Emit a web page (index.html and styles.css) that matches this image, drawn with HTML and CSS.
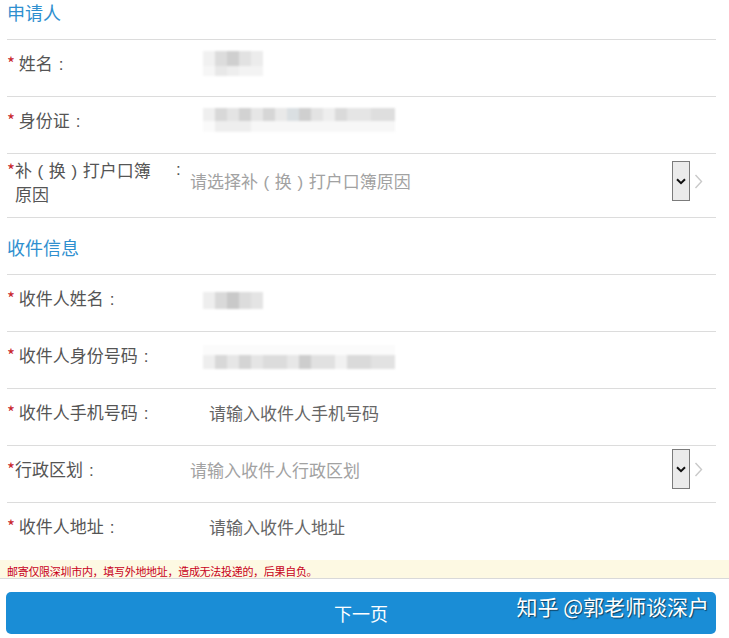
FILE: index.html
```html
<!DOCTYPE html>
<html lang="zh-CN">
<head>
<meta charset="utf-8">
<title>申请人</title>
<link rel="stylesheet" href="styles.css">
</head>
<body>
<div class="form">
  <div class="section-head first">申请人</div>
  <div class="row">
    <div class="label"><span class="req">*</span> 姓名<span class="colon">:</span></div>
    <div class="value"><div class="mosaic mosaic-short"></div></div>
  </div>
  <div class="row">
    <div class="label"><span class="req">*</span> 身份证<span class="colon">:</span></div>
    <div class="value"><div class="mosaic mosaic-long"></div></div>
  </div>
  <div class="row row-tall">
    <div class="label label-wrap"><span class="req">*</span><span class="wrap-text"><span class="line">补<span class="paren">(</span>换<span class="paren">)</span>打户口簿</span><span class="line">原因</span></span><span class="colon">:</span></div>
    <div class="value select">
      <span class="select-text">请选择补<span class="paren">(</span>换<span class="paren">)</span>打户口簿原因</span>
      <span class="drop"><svg width="10" height="7" viewBox="0 0 10 7"><path d="M1 1.2 L5 5.2 L9 1.2" fill="none" stroke="#111" stroke-width="2"/></svg></span>
    </div>
    <svg class="chev" width="9" height="15" viewBox="0 0 9 15"><path d="M1.5 1 L7.5 7.5 L1.5 14" fill="none" stroke="#c9c9c9" stroke-width="1.4"/></svg>
  </div>
  <div class="section-head">收件信息</div>
  <div class="row">
    <div class="label"><span class="req">*</span> 收件人姓名<span class="colon">:</span></div>
    <div class="value"><div class="mosaic mosaic-short2"></div></div>
  </div>
  <div class="row">
    <div class="label"><span class="req">*</span> 收件人身份号码<span class="colon">:</span></div>
    <div class="value"><div class="mosaic mosaic-long2"></div></div>
  </div>
  <div class="row">
    <div class="label"><span class="req">*</span> 收件人手机号码<span class="colon">:</span></div>
    <div class="value"><span class="input">请输入收件人手机号码</span></div>
  </div>
  <div class="row">
    <div class="label"><span class="req">*</span>行政区划<span class="colon">:</span></div>
    <div class="value select">
      <span class="select-text">请输入收件人行政区划</span>
      <span class="drop"><svg width="10" height="7" viewBox="0 0 10 7"><path d="M1 1.2 L5 5.2 L9 1.2" fill="none" stroke="#111" stroke-width="2"/></svg></span>
    </div>
    <svg class="chev" width="9" height="15" viewBox="0 0 9 15"><path d="M1.5 1 L7.5 7.5 L1.5 14" fill="none" stroke="#c9c9c9" stroke-width="1.4"/></svg>
  </div>
  <div class="row last">
    <div class="label"><span class="req">*</span> 收件人地址<span class="colon">:</span></div>
    <div class="value"><span class="input">请输入收件人地址</span></div>
  </div>
</div>
<div class="notice">邮寄仅限深圳市内，填写外地地址，造成无法投递的，后果自负。</div>
<div class="actions">
  <button class="next" type="button">下一页</button>
  <div class="watermark">知乎 @郭老师谈深户</div>
</div>
</body>
</html>
```
FILE: styles.css
```css
* { box-sizing: border-box; }
html, body { margin: 0; padding: 0; background: #fff; }
body {
  font-family: "Noto Sans CJK SC", "Noto Sans", sans-serif;
  color: #555;
  width: 729px;
  overflow: hidden;
}
.form { margin: 0 13px 0 7px; }
.section-head {
  height: 57px;
  border-bottom: 1px solid #dcdcdc;
  display: flex;
  align-items: flex-end;
  padding-bottom: 15px;
  font-size: 18px;
  line-height: 24px;
  color: #2f8fcf;
}
.section-head.first { height: 40px; }
.row {
  height: 57px;
  border-bottom: 1px solid #dcdcdc;
  display: flex;
  align-items: center;
  padding-bottom: 10px;
}
.row.row-tall { height: 64px; padding-bottom: 0; }
.row.last { border-bottom: none; }
.label {
  width: 183px;
  flex: none;
  font-size: 17px;
  line-height: 23px;
  color: #555;
  white-space: nowrap;
}
.colon {
  font-family: "Liberation Sans", sans-serif;
  padding: 0 6px;
}
.paren {
  padding: 0 5.6px;
  font-family: "Liberation Sans", sans-serif;
}
.req { color: #c8262c; }
.label-wrap { display: flex; align-items: flex-start; margin-top: -8px; line-height: 22px; }
.wrap-text { width: 151px; display: flex; flex-direction: column; }
.line { display: block; }
.label-wrap .colon { flex: none; padding-left: 10px; }
.value { flex: 1; display: flex; align-items: center; min-width: 0; }
.input { padding-left: 19px; font-size: 17px; line-height: 23px; color: #666; }
.select { height: 40px; margin-top: 0; }
.row-tall .select { margin-top: 0; margin-bottom: 9px; }
.select-text { flex: 1; font-size: 17px; line-height: 23px; color: #a2a2a2; }
.drop {
  width: 18px;
  height: 40px;
  background: #ebebeb;
  border: 1px solid #7b7b7b;
  display: flex;
  align-items: center;
  justify-content: center;
}
.chev { flex: none; margin: 0 13px 0 4px; }
.row-tall .chev { margin: 0 13px 9px 4px; }
.mosaic { margin-left: 13px; filter: blur(1.2px); }
.mosaic-short {
  width: 60px; height: 25px;
  background:
    linear-gradient(to right, #f1f1f1 0 12px, #dcdcdc 12px 24px, #cfcfcf 24px 36px, #e2e2e2 36px 48px, #ececec 48px 60px) top / 100% 60% no-repeat,
    linear-gradient(to right, #f6f6f6 0 12px, #e8e8e8 12px 24px, #eeeeee 24px 36px, #f3f3f3 36px 60px) bottom / 100% 40% no-repeat;
}
.mosaic-long {
  width: 192px; height: 24px;
  background:
    linear-gradient(to right, #efefef 0 12px, #d8d8d8 12px 24px, #e4e4e4 24px 36px, #d2d2d2 36px 48px, #e6e6e6 48px 60px, #d6d6d6 60px 72px, #e9e9e9 72px 84px, #dadfe2 84px 96px, #cfcfcf 96px 108px, #e3e3e3 108px 120px, #eeeeee 120px 132px, #dadada 132px 144px, #e5e5e5 144px 168px, #dedede 168px 192px) top / 100% 55% no-repeat,
    linear-gradient(to right, #fafafa 0 12px, #eeeeee 12px 48px, #f7f7f7 48px 192px) bottom / 100% 45% no-repeat;
}
.mosaic-short2 {
  width: 60px; height: 17px;
  margin-top: 5px;
  background: linear-gradient(to right, #eeeeee 0 12px, #d9d9d9 12px 24px, #c9c9c9 24px 36px, #dcdcdc 36px 48px, #e4e4e4 48px 60px);
}
.mosaic-long2 {
  width: 192px; height: 24px;
  margin-top: 4px;
  background:
    linear-gradient(to right, #fbfbfb 0 192px) top / 100% 40% no-repeat,
    linear-gradient(to right, #eeeeee 0 12px, #d8d8d8 12px 24px, #e6e6e6 24px 36px, #d4d4d4 36px 48px, #e5e5e5 48px 60px, #dcdcdc 60px 84px, #e7e7e7 84px 96px, #cdcdcd 96px 108px, #e1e1e1 108px 132px, #f1f1f1 132px 144px, #dadada 144px 168px, #e2e2e2 168px 192px) bottom / 100% 60% no-repeat;
}
.notice {
  height: 19px;
  background: #fdf9e3;
  border-bottom: 1px solid #d9d9d9;
  font-size: 11px;
  line-height: 14px;
  padding-top: 4px;
  letter-spacing: -0.3px;
  color: #c8001a;
  padding-left: 7px;
  white-space: nowrap;
}
.actions {
  position: relative;
  padding: 13px 13px 0 6px;
}
.next {
  display: block;
  width: 100%;
  height: 42px;
  border: none;
  border-radius: 5px;
  background: #1a8dd6;
  color: #fff;
  font-family: "Noto Sans CJK SC", sans-serif;
  font-size: 18px;
  line-height: 42px;
  padding: 0;
}
.watermark {
  position: absolute;
  right: 20px;
  top: 14px;
  font-size: 21px;
  line-height: 26px;
  color: #fff;
  text-shadow: 1px 1px 1px rgba(0,0,0,0.55);
  font-family: "Noto Sans CJK SC", sans-serif;
}
```
